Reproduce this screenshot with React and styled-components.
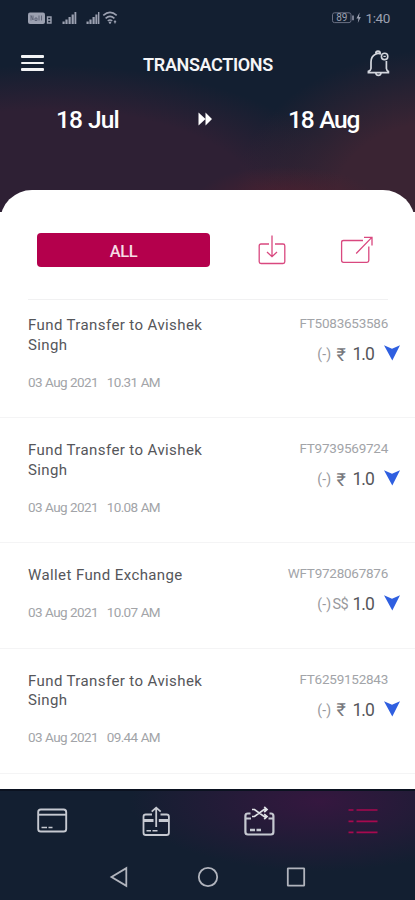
import styled, { createGlobalStyle } from "styled-components";

const transactions = [
  {
    title: "Fund Transfer to Avishek Singh",
    time: "10.31 AM",
    refNo: "FT5083653586",
    currency: "₹",
  },
  {
    title: "Fund Transfer to Avishek Singh",
    time: "10.08 AM",
    refNo: "FT9739569724",
    currency: "₹",
  },
  {
    title: "Wallet Fund Exchange",
    time: "10.07 AM",
    refNo: "WFT9728067876",
    currency: "S$",
  },
  {
    title: "Fund Transfer to Avishek Singh",
    time: "09.44 AM",
    refNo: "FT6259152843",
    currency: "₹",
  },
];

export default function App() {
  return (
    <>
      <GlobalStyle />
      <Screen>
        <Hero>
          <StatusBar>
            <StatusLeft />
            <StatusRight>
              <BatteryIcon />
              <Clock>1:40</Clock>
            </StatusRight>
          </StatusBar>
          <AppBar>
            <MenuButton aria-label="menu">
              <span />
              <span />
              <span />
            </MenuButton>
            <PageTitle>TRANSACTIONS</PageTitle>
            <BellIcon />
          </AppBar>
          <DateRange>
            <DateText>18 Jul</DateText>
            <svg width="16" height="14" viewBox="0 0 16 14" fill="#fff">
              <path d="M2.5 0.5 L9.5 7 L2.5 13.5 Z M9.5 0.5 L16 7 L9.5 13.5 Z" />
            </svg>
            <DateText>18 Aug</DateText>
          </DateRange>
        </Hero>

        <Sheet>
          <Filters>
            <AllButton>ALL</AllButton>
            <DownloadIcon />
            <ShareIcon />
          </Filters>
          <List>
            {transactions.map((t) => (
              <Row key={t.refNo}>
                <Details>
                  <Title>{t.title}</Title>
                  <When>
                    <span>03 Aug 2021</span>
                    <span>{t.time}</span>
                  </When>
                </Details>
                <Summary>
                  <RefNo>{t.refNo}</RefNo>
                  <Amount>
                    <Sign>(-)</Sign>
                    <Currency $small={t.currency === "S$"}>
                      {t.currency}
                    </Currency>
                    <Value>1.0</Value>
                    <svg width="16" height="16" viewBox="0 0 16 16">
                      <path
                        d="M0 0.3 L8 3.8 L16 0.3 L8.3 15.5 Z"
                        fill="#2f5fe0"
                      />
                    </svg>
                  </Amount>
                </Summary>
              </Row>
            ))}
          </List>
        </Sheet>

        <Footer>
          <Tabs>
            <CardIcon />
            <TopUpIcon />
            <ExchangeIcon />
            <ListIcon />
          </Tabs>
          <SystemNav>
            <svg width="20" height="22" viewBox="0 0 20 22">
              <path d="M17.3 2.2 V19.8 L2.5 11 Z" />
            </svg>
            <svg width="22" height="22" viewBox="0 0 22 22">
              <circle cx="11" cy="11" r="9.2" />
            </svg>
            <svg width="20" height="22" viewBox="0 0 20 22">
              <rect x="1.8" y="2.3" width="16.4" height="17.4" rx="0.5" />
            </svg>
          </SystemNav>
        </Footer>
      </Screen>
    </>
  );
}

// ICONS
function StatusLeft() {
  return (
    <svg width="92" height="16" viewBox="0 0 92 16" fill="#9ba0b0">
      <rect x="0" y="2.5" width="17" height="11.5" rx="2" />
      <path
        d="M3 10.5 V5.5 L5 10 V5.5 M7 8 H9 V10.5 H7 Z M11 5.5 V10.5 M13.5 5.5 V10.5"
        stroke="#5b6175"
        strokeWidth="0.9"
        fill="none"
      />
      <path
        d="M19.5 7 H23 V13 H19.5 Z M19.5 10 H23"
        stroke="#9ba0b0"
        strokeWidth="1.4"
        fill="none"
      />
      <path d="M34.5 11.5h2.2v2.5h-2.2z M37.4 9.5h2.2v4.5h-2.2z M40.5 7h2.2v7h-2.2z M43.6 4.5h2.2v9.5h-2.2z M46.5 2h1.8v12h-1.8z" />
      <path d="M58.5 11.5h2.2v2.5h-2.2z M61.4 9.5h2.2v4.5h-2.2z M64.5 7h2.2v7h-2.2z M67.4 4.5h2v9.5h-2z M70 2h1.4v12h-1.4z" />
      <g fill="none" stroke="#9ba0b0" strokeWidth="1.6">
        <path d="M75.3 5.4 Q82 -0.8 88.7 5.4" />
        <path d="M77.6 8.4 Q82 4.2 86.4 8.4" />
        <path d="M79.8 11 Q82 9 84.2 11" />
      </g>
      <circle cx="82" cy="12.6" r="1.2" />
      <path d="M87 10 l1.5 2 h-3 z M87 13.8 l1.3 -1.5 h-2.6 z" />
    </svg>
  );
}

function BatteryIcon() {
  return (
    <svg width="31" height="14" viewBox="0 0 31 14">
      <rect
        x="1.5"
        y="1.8"
        width="18.5"
        height="9.8"
        rx="2"
        fill="none"
        stroke="#6a7084"
        strokeWidth="1"
      />
      <path d="M21 4.5h2v4.8h-2z" fill="#777d90" />
      <text
        x="10.8"
        y="10.4"
        fontSize="10"
        textAnchor="middle"
        fill="#9ba0b0"
      >
        89
      </text>
      <path d="M28.6 1.5 L25.4 7.6 H27.4 L26.8 12 L29.8 6 H28 Z" fill="#9ba0b0" />
    </svg>
  );
}

function BellIcon() {
  return (
    <svg
      width="24"
      height="28"
      viewBox="0 0 24 28"
      fill="none"
      stroke="#d3d6dd"
      strokeWidth="1.7"
    >
      <path d="M15 5 Q12 3.8 9.4 5.2 Q5 7.4 5 13 V19.5 Q4.8 21.5 2.4 22.4 V23.6 H22.4 V22.4 Q20.6 21.5 20.4 19.5 V12" />
      <path d="M9.9 4.6 Q9.9 2.2 12 2.2 Q14 2.2 14.1 4.4" strokeWidth="2" />
      <path d="M9.8 23.8 Q10.2 26.4 12.4 26.4 Q14.6 26.4 15 23.8" />
      <circle cx="18.6" cy="7.4" r="3.2" strokeWidth="1.6" />
      <path d="M17.4 7.4 H19.8" strokeWidth="1.2" />
    </svg>
  );
}

function DownloadIcon() {
  return (
    <svg
      width="28"
      height="30"
      viewBox="0 0 28 30"
      fill="none"
      stroke="#d9487f"
      strokeWidth="1.3"
    >
      <path d="M11 9 H3 Q1.2 9 1.2 10.7 V26.8 Q1.2 28.5 3 28.5 H25 Q26.8 28.5 26.8 26.8 V10.7 Q26.8 9 25 9 H17" />
      <path d="M14 0.5 V21.7 M9 17 L14 21.7 L19 17" />
    </svg>
  );
}

function ShareIcon() {
  return (
    <svg
      width="34"
      height="28"
      viewBox="0 0 34 28"
      fill="none"
      stroke="#d9487f"
      strokeWidth="1.3"
    >
      <path d="M23 4.5 H3.5 Q1.6 4.5 1.6 6.3 V24.5 Q1.6 26.3 3.5 26.3 H27 Q28.8 26.3 28.8 24.5 V10.5" />
      <path d="M16.2 17.5 L31.6 1.6 M24 1.4 H32 V9.5" />
    </svg>
  );
}

function CardIcon() {
  return (
    <svg
      width="32"
      height="34"
      viewBox="0 0 32 34"
      fill="none"
      stroke="#c6c9d1"
      strokeWidth="1.9"
    >
      <rect x="2.2" y="5.5" width="28" height="22" rx="2.6" />
      <path d="M2 10.7 H30" />
      <path d="M5.5 23.5 H11 M12.5 23.5 H16.5" strokeWidth="1.5" />
    </svg>
  );
}

function TopUpIcon() {
  return (
    <svg
      width="32"
      height="34"
      viewBox="0 0 32 34"
      fill="none"
      stroke="#c6c9d1"
      strokeWidth="1.8"
    >
      <path d="M12 10.5 H5.8 Q3.5 10.5 3.5 12.8 V28.7 Q3.5 31 5.8 31 H26.6 Q28.9 31 28.9 28.7 V12.8 Q28.9 10.5 26.6 10.5 H20.5" />
      <path d="M3.5 16.5 H13.5 M18.8 16.5 H28.9" strokeWidth="3" />
      <path d="M16.2 3.5 V23 M11.7 7.6 L16.2 3.6 L20.7 7.6" />
      <path d="M6.5 26.8 H11 M12.5 26.8 H17.5" strokeWidth="1.5" />
    </svg>
  );
}

function ExchangeIcon() {
  return (
    <svg
      width="32"
      height="34"
      viewBox="0 0 32 34"
      fill="none"
      stroke="#c6c9d1"
      strokeWidth="2.2"
    >
      <path d="M7.5 9.5 H4.9 Q2.4 9.5 2.4 12 V28 Q2.4 30.5 4.9 30.5 H27.9 Q30.4 30.5 30.4 28 V12 Q30.4 9.5 27.9 9.5 H26.5" />
      <path d="M2.4 14.4 H8 M25.5 14.4 H30.4" strokeWidth="2" />
      <path
        d="M9 5.5 H11.5 L21 12.5 H24 M9 12.5 H11.5 L21 5.5 H24 M21.2 3 L24 5.5 L21.2 8 M21.2 10.2 L24 12.5 L21.2 15"
        stroke="#e1e3e8"
        strokeWidth="1.7"
      />
      <path d="M7 26 H12 M13.5 26 H18" strokeWidth="2.4" />
    </svg>
  );
}

function ListIcon() {
  return (
    <svg
      width="32"
      height="34"
      viewBox="0 0 32 34"
      stroke="#a8094f"
      strokeWidth="1.7"
    >
      <path d="M1.5 6 H6.5 M9.5 6 H30.5 M1.5 17.3 H6.5 M9.5 17.3 H30.5 M1.5 28.3 H6.5 M9.5 28.3 H30.5" />
    </svg>
  );
}

// STYLED COMPONENTS
const GlobalStyle = createGlobalStyle`
  * {
    box-sizing: border-box;
  }
  body {
    margin: 0;
    background: #fff;
    font-family: Roboto, "Liberation Sans", sans-serif;
  }
  svg {
    display: block;
    flex-shrink: 0;
  }
`;

const Screen = styled.div`
  display: flex;
  flex-direction: column;
  height: 900px;
  width: 415px;
  overflow: hidden;
  background: #fff;
`;

const Hero = styled.header`
  flex: 0 0 212px;
  background: radial-gradient(
      ellipse 90px 34px at 285px 200px,
      rgba(88, 32, 46, 0.7),
      transparent
    ),
    radial-gradient(
      ellipse 205px 145px at 440px 195px,
      #3a2433 50%,
      transparent
    ),
    radial-gradient(
      ellipse 310px 140px at 50px 205px,
      #2e2034 68%,
      transparent
    ),
    #131f31;
`;

const StatusBar = styled.div`
  display: flex;
  justify-content: space-between;
  align-items: center;
  height: 36px;
  padding: 0 25px 0 28px;
`;

const StatusRight = styled.div`
  display: flex;
  align-items: center;
  gap: 4px;
`;

const Clock = styled.span`
  color: #9ba0b0;
  font-size: 13.5px;
  line-height: 14px;
  letter-spacing: -0.4px;
`;

const AppBar = styled.div`
  display: flex;
  justify-content: space-between;
  align-items: center;
  height: 54px;
  padding: 0 25px 0 21px;
`;

const MenuButton = styled.button`
  display: flex;
  flex-direction: column;
  gap: 4px;
  width: 24px;
  padding: 0 1px 0 0;
  border: none;
  background: none;
  span {
    height: 2.7px;
    border-radius: 1px;
    background: #f2f3f5;
  }
`;

const PageTitle = styled.h1`
  margin: 2px 0 0 5px;
  color: #f5f5f7;
  font-size: 18px;
  font-weight: 600;
  letter-spacing: -0.35px;
`;

const DateRange = styled.div`
  display: flex;
  justify-content: space-between;
  align-items: center;
  height: 58px;
  padding: 0 56px;
`;

const DateText = styled.span`
  width: 71px;
  color: #fff;
  font-size: 24.5px;
  font-weight: 500;
  letter-spacing: -1.25px;
  word-spacing: 1px;
  white-space: nowrap;
  &:first-child {
    width: 64px;
    letter-spacing: -0.95px;
  }
`;

const Sheet = styled.main`
  flex: 1;
  min-height: 0;
  margin-top: -22px;
  padding-top: 43px;
  border-radius: 32px 32px 0 0;
  background: #fff;
`;

const Filters = styled.div`
  display: flex;
  align-items: center;
  height: 67px;
  margin: 0 27px 0 28px;
  padding: 0 0 33px 9px;
  border-bottom: 1px solid #f1f1f2;
  svg:nth-of-type(1) {
    margin: 0 54px 0 48px;
  }
`;

const AllButton = styled.button`
  flex: 0 0 173px;
  height: 34px;
  padding: 3px 0 0;
  border: none;
  border-radius: 4px;
  background: #b4004c;
  color: #f6dce6;
  font-family: inherit;
  font-size: 16.5px;
  font-weight: 500;
  letter-spacing: -0.5px;
`;

const List = styled.div`
  display: flex;
  flex-direction: column;
`;

const Row = styled.article`
  display: flex;
  justify-content: space-between;
  padding: 23px 15px 27.5px 28px;
  border-bottom: 1px solid #f4f4f5;
  &:first-child {
    padding-top: 16px;
  }
`;

const Details = styled.div`
  width: 190px;
`;

const Title = styled.p`
  margin: 0;
  color: #55565a;
  font-size: 15px;
  line-height: 19.5px;
  letter-spacing: 0.4px;
`;

const When = styled.p`
  display: flex;
  gap: 9px;
  margin: 18.5px 0 0;
  color: #a2a4a8;
  font-size: 13.5px;
  line-height: 16px;
  letter-spacing: -0.65px;
  word-spacing: 0.5px;
`;

const Summary = styled.div`
  display: flex;
  flex-direction: column;
  align-items: flex-end;
  margin-top: -1px;
`;

const RefNo = styled.span`
  margin-right: 12px;
  color: #a2a4a8;
  font-size: 13.5px;
  line-height: 16px;
  letter-spacing: -0.25px;
`;

const Amount = styled.div`
  display: flex;
  align-items: center;
  height: 20px;
  margin-top: 13px;
  svg {
    margin: -2px 0 0 10px;
  }
`;

const Sign = styled.span`
  color: #98999d;
  font-size: 14px;
  letter-spacing: 0.2px;
`;

const Currency = styled.span`
  width: ${({ $small }) => ($small ? "20px" : "16px")};
  margin-left: ${({ $small }) => ($small ? "1px" : "5px")};
  color: ${({ $small }) => ($small ? "#98999d" : "#77787c")};
  font-size: ${({ $small }) => ($small ? "14.5px" : "18px")};
  letter-spacing: ${({ $small }) => ($small ? "-0.5px" : "0")};
`;

const Value = styled.span`
  color: #55565a;
  font-size: 17.5px;
  letter-spacing: -0.9px;
`;

const Footer = styled.footer`
  flex: 0 0 111px;
  border-top: 2px solid #0b1220;
  background: radial-gradient(
        ellipse 190px 70px at 320px 10px,
        #35173f,
        transparent
      )
      no-repeat,
    #131f31;
`;

const Tabs = styled.nav`
  display: flex;
  justify-content: space-between;
  align-items: center;
  height: 60px;
  padding: 0 36px 0 36px;
`;

const SystemNav = styled.div`
  display: flex;
  justify-content: space-between;
  align-items: center;
  height: 49px;
  padding: 2px 109px 0;
  svg {
    fill: none;
    stroke: #b1b4bd;
    stroke-width: 1.8;
  }
`;
